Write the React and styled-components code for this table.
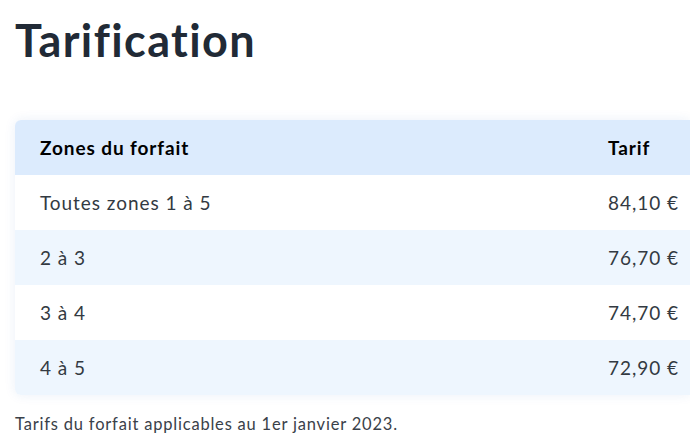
import React from "react";
import styled, { createGlobalStyle } from "styled-components";

const GlobalStyle = createGlobalStyle`
  html, body {
    margin: 0;
    padding: 0;
    overflow: hidden;
    background: #ffffff;
    font-family: Lato, "Open Sans", sans-serif;
  }
`;

const Page = styled.div`
  padding: 0 0 0 15px;
`;

const Title = styled.h1`
  margin: 10px 0 0;
  font-size: 45px;
  line-height: 60px;
  font-weight: 700;
  letter-spacing: 1.4px;
  color: #212a36;
`;

const Table = styled.div`
  margin-top: 50px;
  border-radius: 6px 0 0 6px;
  overflow: hidden;
  box-shadow: 0 0 12px rgba(30, 90, 180, 0.09);
`;

const Row = styled.div`
  display: grid;
  grid-template-columns: 568px 1fr;
  height: 55px;
  align-items: center;
  background: ${(p) => (p.$head ? "#dcebfd" : p.$alt ? "#eef6fe" : "#ffffff")};
  color: ${(p) => (p.$head ? "#000000" : "#333a42")};
  font-size: 19px;
  font-weight: ${(p) => (p.$head ? 700 : 400)};
  letter-spacing: ${(p) => (p.$head ? "0.9px" : "0.95px")};
`;

const Cell = styled.div`
  padding-left: 25px;
  white-space: nowrap;
`;

const Note = styled.p`
  margin: 19px 0 0;
  font-size: 16.5px;
  letter-spacing: 0.8px;
  color: #3a4149;
`;

const rows = [
  ["Toutes zones 1 à 5", "84,10 €"],
  ["2 à 3", "76,70 €"],
  ["3 à 4", "74,70 €"],
  ["4 à 5", "72,90 €"],
];

export default function App() {
  return (
    <Page>
      <GlobalStyle />
      <Title>Tarification</Title>
      <Table>
        <Row $head>
          <Cell>Zones du forfait</Cell>
          <Cell>Tarif</Cell>
        </Row>
        {rows.map((r, i) => (
          <Row key={i} $alt={i % 2 === 1}>
            <Cell>{r[0]}</Cell>
            <Cell>{r[1]}</Cell>
          </Row>
        ))}
      </Table>
      <Note>Tarifs du forfait applicables au 1er janvier 2023.</Note>
    </Page>
  );
}
